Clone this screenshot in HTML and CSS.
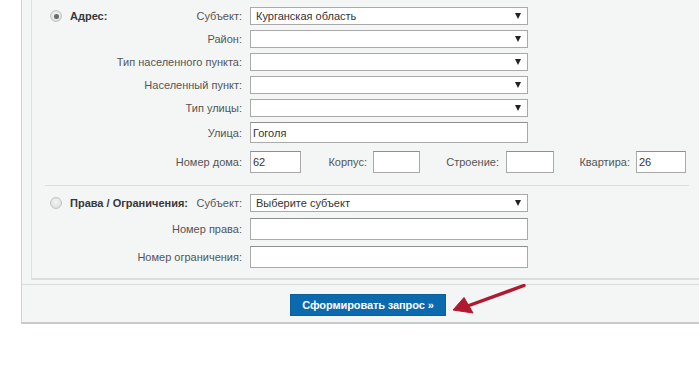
FILE: index.html
```html
<!DOCTYPE html>
<html lang="ru">
<head>
<meta charset="utf-8">
<link rel="stylesheet" href="styles.css">
</head>
<body>
<div class="outer">
  <div class="inner">
    <div class="row r1">
      <div class="lab lab-split">
        <span class="opt"><span class="radio checked"></span><b>Адрес:</b></span>
        <span>Субъект:</span>
      </div>
      <div class="sel"><span>Курганская область</span><span class="caret"></span></div>
    </div>
    <div class="row r-sel">
      <div class="lab">Район:</div>
      <div class="sel"><span></span><span class="caret"></span></div>
    </div>
    <div class="row r-sel">
      <div class="lab">Тип населенного пункта:</div>
      <div class="sel"><span></span><span class="caret"></span></div>
    </div>
    <div class="row r-sel">
      <div class="lab">Населенный пункт:</div>
      <div class="sel"><span></span><span class="caret"></span></div>
    </div>
    <div class="row r-sel">
      <div class="lab">Тип улицы:</div>
      <div class="sel"><span></span><span class="caret"></span></div>
    </div>
    <div class="row r-street">
      <div class="lab">Улица:</div>
      <div class="inp wide">Гоголя</div>
    </div>
    <div class="row r-house">
      <div class="lab">Номер дома:</div>
      <div class="inp w51">62</div>
      <div class="pair p2"><span class="plab">Корпус:</span><div class="inp w47"></div></div>
      <div class="pair p3"><span class="plab">Строение:</span><div class="inp w48"></div></div>
      <div class="pair p4"><span class="plab">Квартира:</span><div class="inp w50">26</div></div>
    </div>
    <div class="sep"></div>
    <div class="row r-rights">
      <div class="lab lab-split">
        <span class="opt"><span class="radio"></span><b>Права / Ограничения:</b></span>
        <span>Субъект:</span>
      </div>
      <div class="sel"><span>Выберите субъект</span><span class="caret"></span></div>
    </div>
    <div class="row r-num">
      <div class="lab">Номер права:</div>
      <div class="inp wide tall"></div>
    </div>
    <div class="row r-num">
      <div class="lab">Номер ограничения:</div>
      <div class="inp wide tall"></div>
    </div>
  </div>
  <div class="footer">
    <button class="submit" type="button">Сформировать запрос »</button>
    <svg class="pointer" width="80" height="34" viewBox="0 0 80 34">
      <path d="M72 1.5 L17 21.5" stroke="#b01a30" stroke-width="3.4" stroke-linecap="round" fill="none"/>
      <path d="M1 26 L12 13.5 L21 29 Z" fill="#b01a30" stroke="#b01a30" stroke-width="1" stroke-linejoin="round"/>
    </svg>
  </div>
</div>
</body>
</html>
```

FILE: styles.css
```css
* { box-sizing: border-box; }

body {
  margin: 0;
  background: #ffffff;
  font-family: "Liberation Sans", Arial, sans-serif;
  font-size: 11px;
  color: #555;
  width: 699px;
  height: 391px;
  overflow: hidden;
}

.outer {
  margin-left: 21px;
  width: 700px;
  background: #f4f5f5;
  border-left: 1px solid #d2d4d4;
  border-bottom: 2px solid #c9cbcb;
}

.inner {
  margin-left: 9px;
  border-left: 1px solid #dfe1e1;
  border-bottom: 2px solid #dcdede;
  padding: 7px 0 10px 0;
  display: flex;
  flex-direction: column;
}

.row {
  display: flex;
  align-items: center;
}

.r-sel { margin-top: 5px; }
.r-street { margin-top: 5px; }
.r-house { margin-top: 8px; }
.r-rights { margin-top: 8px; }
.r-num { margin-top: 6px; }

.lab {
  width: 210px;
  margin-right: 8px;
  text-align: right;
  white-space: nowrap;
  color: #555;
}

.lab-split {
  display: flex;
  justify-content: space-between;
  align-items: center;
  padding-left: 18px;
}

.opt {
  display: flex;
  align-items: center;
}

.opt b {
  color: #383838;
  font-weight: bold;
  margin-left: 8px;
}

.radio {
  width: 12px;
  height: 12px;
  border-radius: 50%;
  border: 1px solid #c4c4c4;
  background: radial-gradient(circle at 50% 40%, #f4f4f4 0%, #d8d8d8 100%);
  display: flex;
  align-items: center;
  justify-content: center;
}

.radio.checked::after {
  content: "";
  width: 5px;
  height: 5px;
  border-radius: 50%;
  background: #6a6a6a;
}

.sel {
  width: 278px;
  height: 18px;
  background: #fff;
  border: 1px solid #a9a9a9;
  display: flex;
  align-items: center;
  justify-content: space-between;
  padding: 0 5px 0 5px;
  color: #333;
}

.caret {
  width: 0;
  height: 0;
  border-left: 3.5px solid transparent;
  border-right: 3.5px solid transparent;
  border-top: 6px solid #222;
  margin-right: 1px;
}

.inp {
  height: 21px;
  background: #fff;
  border: 1px solid #a9a9a9;
  border-top-color: #8f8f8f;
  display: flex;
  align-items: center;
  padding-left: 2px;
  color: #333;
}

.inp.wide { width: 278px; }
.inp.tall { height: 22px; }
.r-house .inp { height: 22px; }
.w51 { width: 51px; }
.w47 { width: 47px; }
.w48 { width: 48px; }
.w50 { width: 50px; }

.pair {
  display: flex;
  align-items: center;
}

.plab {
  text-align: right;
  white-space: nowrap;
  color: #555;
}

.p2 .plab { width: 66px; margin-right: 6px; }
.p3 .plab { width: 79px; margin-right: 7px; }
.p4 .plab { width: 76px; margin-right: 6px; }

.sep {
  margin: 12px 0 0 13px;
  width: 644px;
  height: 1px;
  background: #dcdede;
}

.footer {
  position: relative;
  margin-top: 4px;
  border-top: 1px solid #dcdede;
  height: 38px;
  padding-left: 268px;
  padding-top: 9px;
}

.submit {
  width: 156px;
  height: 22px;
  background: #0b69ad;
  border: 1px solid #0a5f9c;
  color: #fff;
  font-family: "Liberation Sans", Arial, sans-serif;
  font-size: 11px;
  font-weight: bold;
  padding: 0;
  letter-spacing: -0.1px;
}

.pointer {
  position: absolute;
  left: 430px;
  top: -1px;
}
```
